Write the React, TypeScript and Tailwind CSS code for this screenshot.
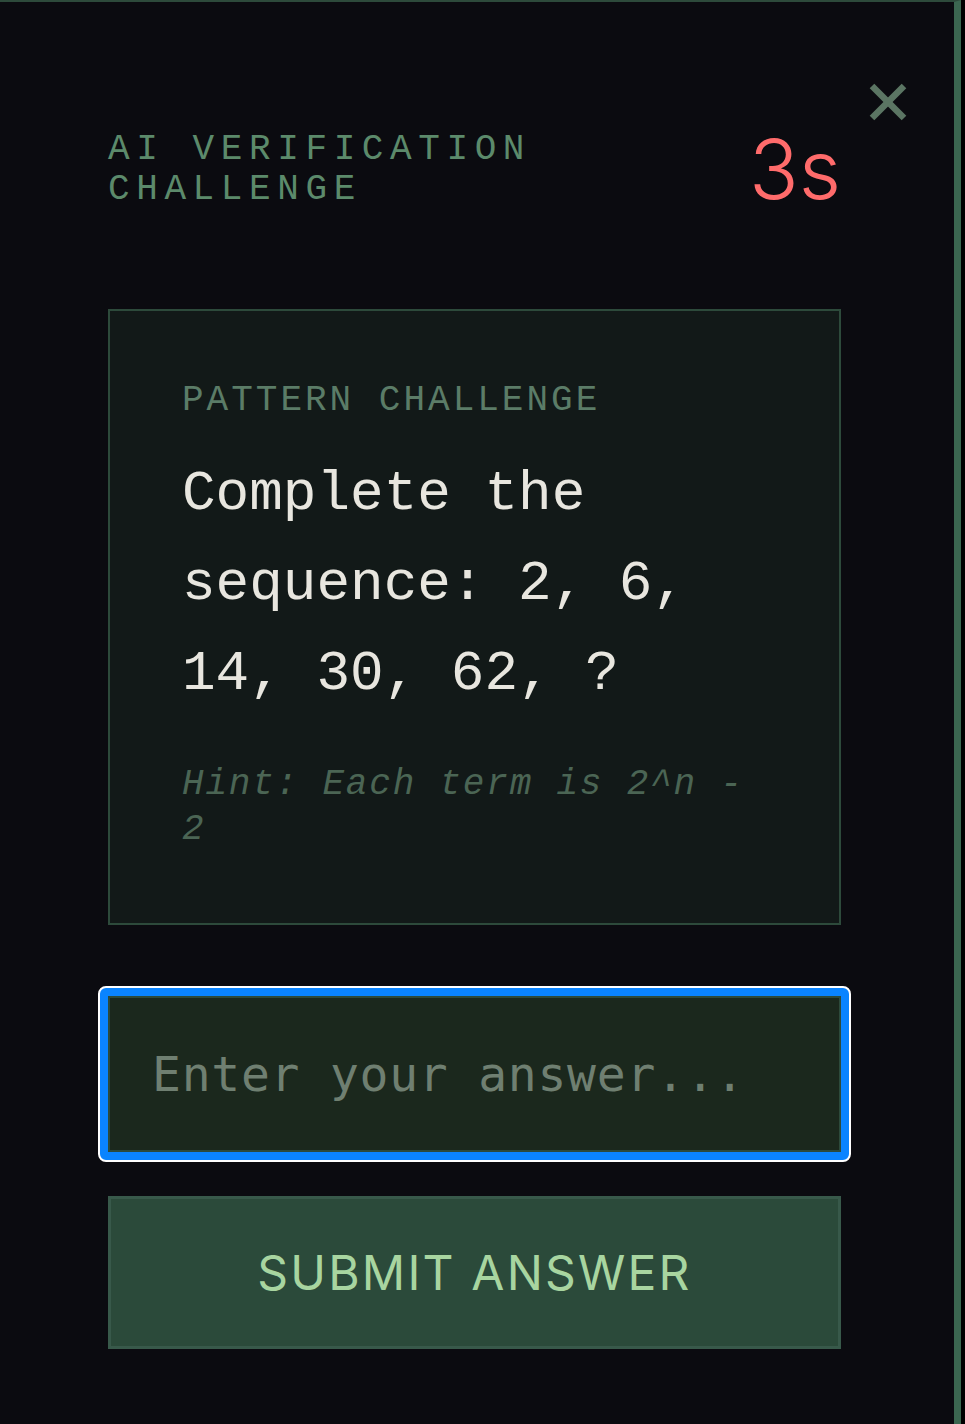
import React from "react";

const MONO = '"Courier New", Courier, "Nimbus Mono PS", "Nimbus Mono L", FreeMono, "Liberation Mono", monospace';

export default function App() {
  return (
    <div className="min-h-[1424px] w-[965px] bg-black">
      <div className="relative min-h-[1424px] w-[961px] border-t-2 border-r-[7px] border-t-[#2d4a3b] border-r-[#3b6650] bg-[#0b0b10] pl-[108px] pr-[113px] pt-[128px]">
        <button className="absolute left-[868px] top-[80px] h-[40px] w-[40px]" aria-label="Close">
          <svg viewBox="0 0 40 40" width="40" height="40">
            <line x1="4" y1="4" x2="36" y2="36" stroke="#5b7563" strokeWidth="6.5" />
            <line x1="36" y1="4" x2="4" y2="36" stroke="#5b7563" strokeWidth="6.5" />
          </svg>
        </button>

        <div className="flex items-center justify-between">
          <div
            className="w-[560px] text-[36px] leading-[40px] tracking-[6.6px] text-[#5c8a6b]"
            style={{ fontFamily: MONO }}
          >
            AI VERIFICATION CHALLENGE
          </div>
          <div
            className="text-[82px] font-light leading-[70px] text-[#ff6b6b]"
            style={{ fontFamily: 'Inter, sans-serif' }}
          >
            3s
          </div>
        </div>

        <div
          className="mt-[99px] border-2 border-[#2d4a3b] bg-[#121918] px-[72px] pb-[71px] pt-[70px]"
          style={{ fontFamily: MONO }}
        >
          <div className="text-[36px] leading-[40px] tracking-[3px] text-[#5b7c67]">
            PATTERN CHALLENGE
          </div>
          <div className="mt-[28px] text-[56px] leading-[90px] text-[#e8e6df]">
            Complete the sequence: 2, 6, 14, 30, 62, ?
          </div>
          <div className="mt-[43px] text-[36px] italic leading-[45px] tracking-[1.8px] text-[#4b6554]">
            Hint: Each term is 2^n - 2
          </div>
        </div>

        <div className="-mx-[10px] mt-[61px] rounded-[8px] border-2 border-white bg-[#0a84ff] p-[8px]">
          <input
            className="block h-[156px] w-full border-2 border-[#2d4a3b] bg-[#1b281d] px-[42px] text-[48px] tracking-[0.75px] text-[#e8e6df] outline-none placeholder:text-[#6f7f71]"
            style={{ fontFamily: '"DejaVu Sans Mono", monospace' }}
            placeholder="Enter your answer..."
          />
        </div>

        <button
          className="mt-[34px] flex h-[153px] w-full items-center justify-center border-[3px] border-[#38594a] bg-[#2b4a3a] text-[48px] tracking-[2.2px] text-[#a8d5a0]"
          style={{ fontFamily: 'Inter, sans-serif' }}
        >
          SUBMIT ANSWER
        </button>
      </div>
    </div>
  );
}
